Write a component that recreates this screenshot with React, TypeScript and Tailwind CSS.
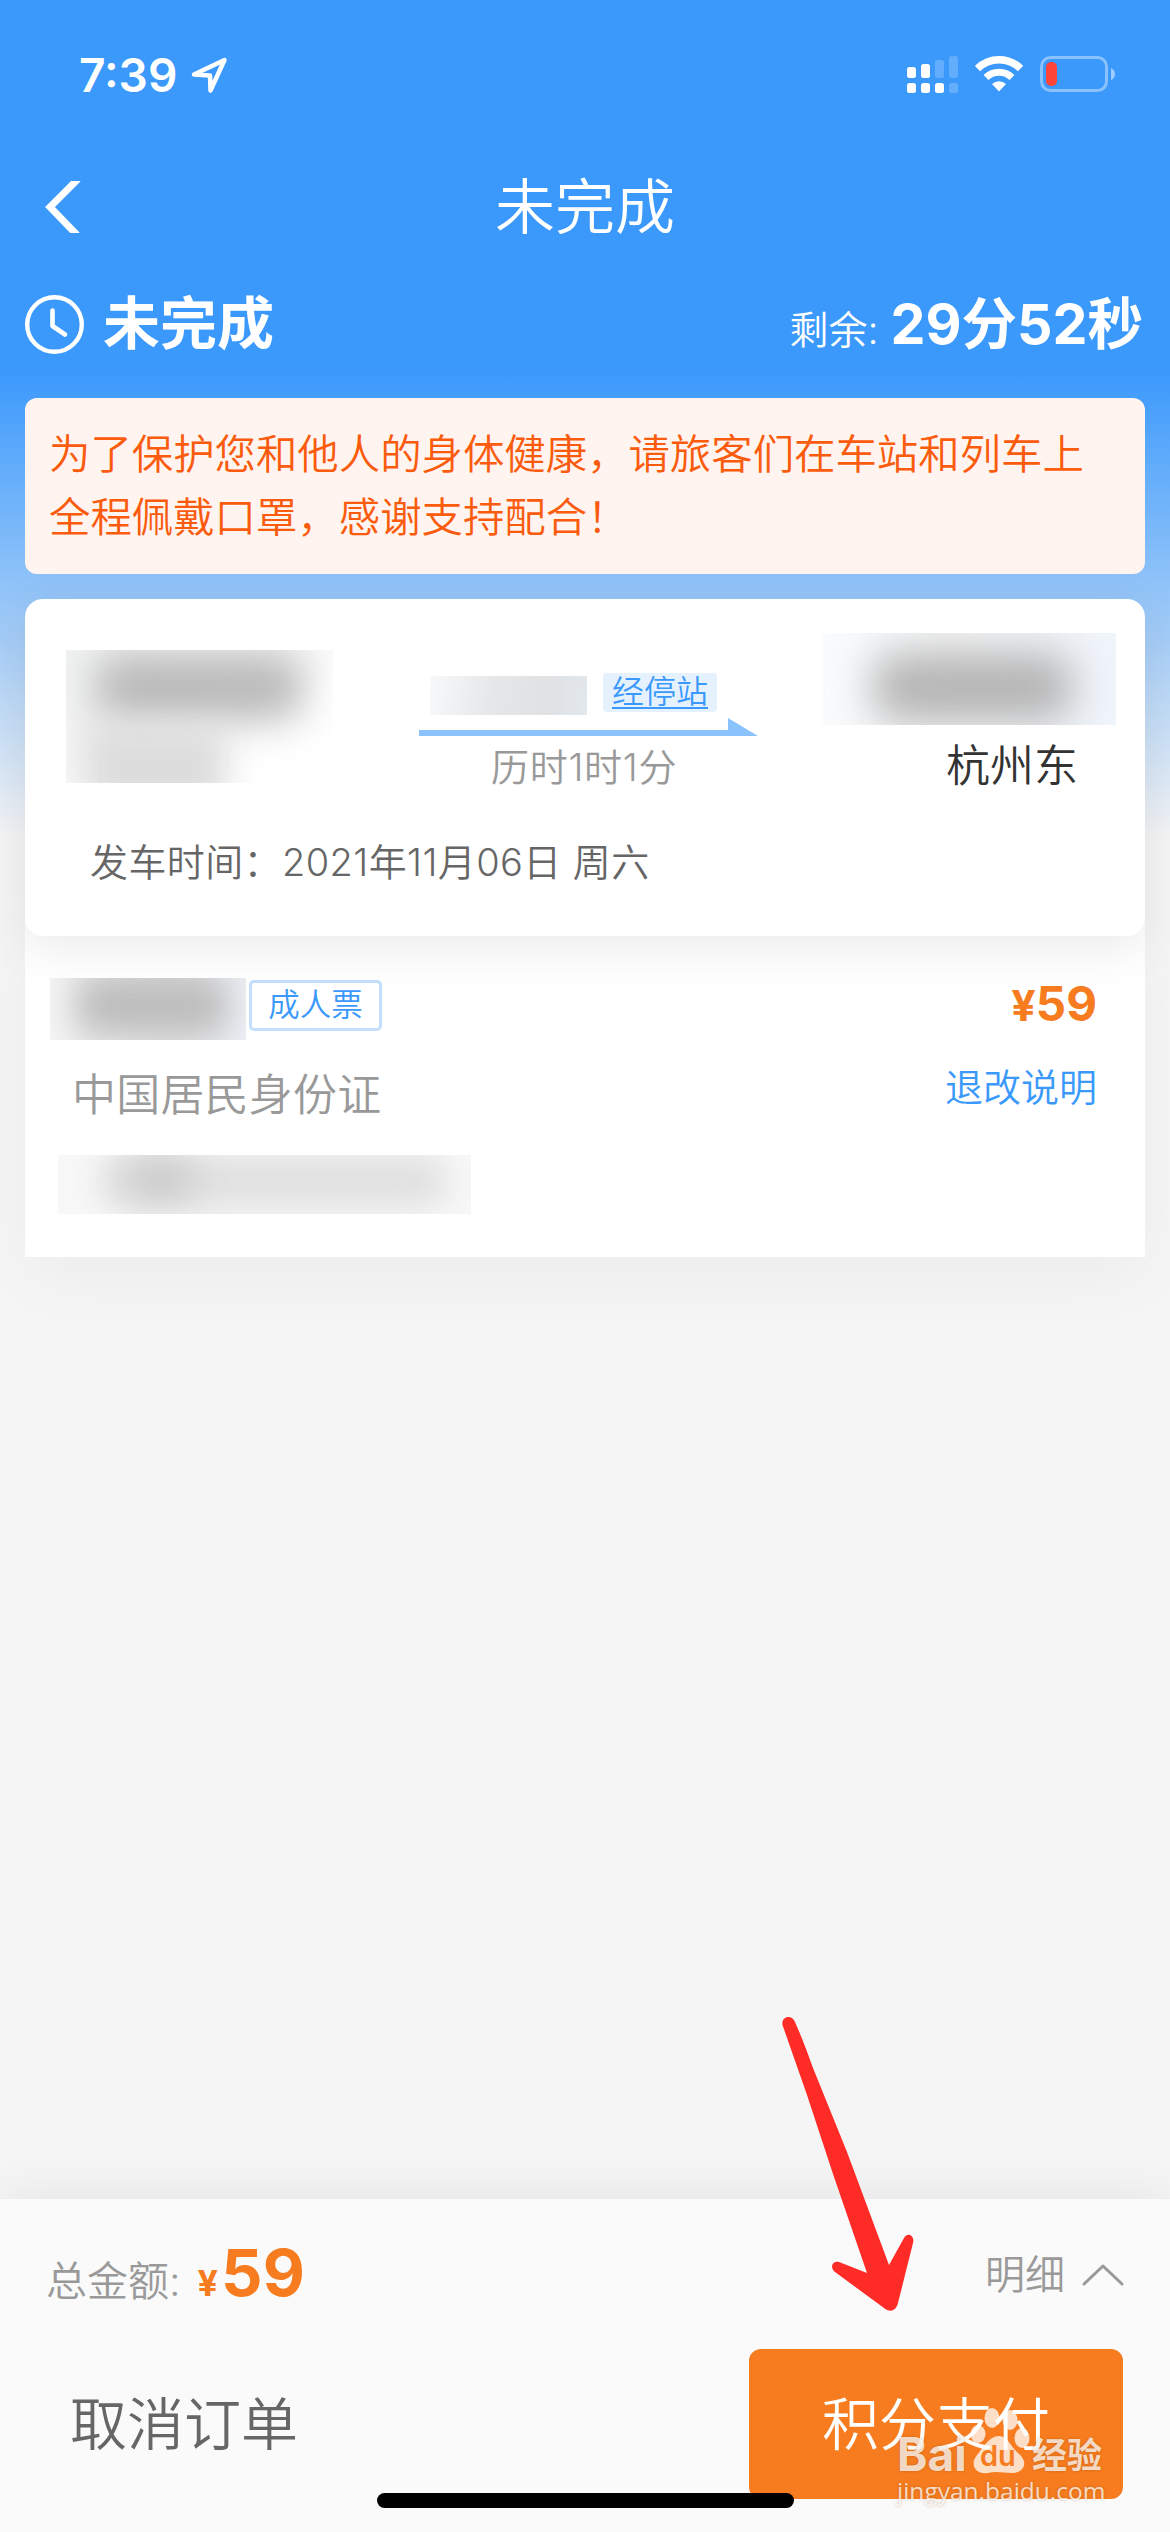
import type { ReactNode } from 'react';

const notice = ['为了保护您和他人的身体健康，请旅客们在车站和列车上', '全程佩戴口罩，感谢支持配合！'];

function StatusBar() {
  return (
    <div className="flex h-[150px] items-start justify-between pt-[48px] pl-[79px] pr-[54px] text-white">
      <div className="flex items-start">
        <span className="text-[46px] leading-[54px] font-semibold w-[112px] whitespace-nowrap">7:39</span>
        <svg className="mt-[8px]" width="38" height="38" viewBox="0 0 38 38" fill="none">
          <path d="M3 18.5 L33.5 4 L19.5 34.5 L19 19.5 Z" stroke="#fff" strokeWidth="4.5" strokeLinejoin="round" />
        </svg>
      </div>
      <div className="flex items-start pt-[7px]">
        <svg width="51" height="38" viewBox="0 0 51 38" fill="#fff">
          <rect x="0" y="12" width="9" height="11" rx="2.5" />
          <rect x="14" y="9" width="9" height="14" rx="2.5" />
          <rect x="28" y="5" width="9" height="18" rx="2.5" opacity="0.2" />
          <rect x="42" y="1" width="9" height="22" rx="2.5" opacity="0.2" />
          <rect x="0" y="28" width="9" height="10" rx="2.5" />
          <rect x="14" y="28" width="9" height="10" rx="2.5" />
          <rect x="28" y="28" width="9" height="10" rx="2.5" />
          <rect x="42" y="28" width="9" height="10" rx="2.5" opacity="0.2" />
        </svg>
        <svg className="ml-[17px]" width="48" height="37" viewBox="0 0 48 37" fill="none">
          <path d="M2.5 13.5 A30.5 30.5 0 0 1 45.5 13.5" stroke="#fff" strokeWidth="7.5" />
          <path d="M11 22.500 A18.5 18.5 0 0 1 37 22.500" stroke="#fff" strokeWidth="7" />
          <path d="M17 29 A10 10 0 0 1 31 29 L24 36.500 Z" fill="#fff" />
        </svg>
        <svg className="ml-[17px] mt-px" width="76" height="36" viewBox="0 0 76 36" fill="none">
          <rect x="1.5" y="1.5" width="65" height="33" rx="9" stroke="#fff" strokeOpacity="0.4" strokeWidth="3" />
          <rect x="6" y="6" width="11" height="24" rx="5" fill="#ff443a" />
          <path d="M71 12 Q75 14 75 18 Q75 22 71 24 Z" fill="#fff" fillOpacity="0.5" />
        </svg>
      </div>
    </div>
  );
}

function Header() {
  return (
    <>
      <div className="grid h-[114px] grid-cols-[1fr_auto_1fr] items-center text-white">
        <svg className="ml-[44px]" width="38" height="52" viewBox="0 0 38 52" fill="none">
          <path d="M34 -2 L6 26 L33 54" stroke="#fff" strokeWidth="7" />
        </svg>
        <h1 className="text-[60px] leading-[80px]">未完成</h1>
      </div>
      <div className="flex h-[134px] items-start justify-between pt-[20px] pl-[25px] pr-[27px] text-white">
        <div className="flex items-start">
          <svg className="mt-[11px]" width="59" height="59" viewBox="0 0 59 59" fill="none" stroke="#fff">
            <circle cx="29.5" cy="29.5" r="27.3" strokeWidth="4.4" />
            <path d="M27.5 15.500V31L40 39.500" strokeWidth="4.6" strokeLinecap="round" strokeLinejoin="round" />
          </svg>
          <span className="ml-[19px] text-[57px] leading-[80px] font-bold">未完成</span>
        </div>
        <div className="flex items-baseline whitespace-nowrap">
          <span className="text-[39px]">剩余:</span>
          <span className="ml-[12px] text-[55.500px] leading-[80px] font-bold">29分52秒</span>
        </div>
      </div>
    </>
  );
}

function TripCard() {
  return (
    <section className="h-[337px] rounded-[18px] bg-white shadow-[0_10px_50px_rgba(0,0,0,0.09)]">
      <div className="flex h-[230px] items-start">
        {/* masked departure time and station */}
        <div className="relative ml-[41px] mt-[51px] h-[133px] w-[267px] overflow-hidden bg-[linear-gradient(150deg,#f1f3f3_0%,#f6f6f6_40%,#ffffff_65%)]">
          <div className="absolute top-[4px] left-[28px] h-[66px] w-[210px] rounded-[24px] bg-[#b8b8b8] blur-[21px]" />
          <div className="absolute top-[76px] left-[18px] h-[80px] w-[142px] rounded-[10px] bg-[#dcdcdc] blur-[17px]" />
        </div>
        <div className="ml-[86px] mt-[74px] w-[340px]">
          <div className="flex items-start">
            <div className="ml-[11px] mt-[3px] h-[39px] w-[157px] bg-[linear-gradient(100deg,#f7f9fa_0%,#e6e7e8_40%,#dfe1e3_75%,#e3e8ee_100%)]" />
            <a className="ml-[16px] block h-[39px] w-[114px] rounded-[4px] bg-[#e5f2fe] pl-[9px] text-[32px] leading-[37px] text-[#3b99fc]">
              <span className="block h-[36px] w-[96px] border-b-[2px] border-[#3b99fc]">经停站</span>
            </a>
          </div>
          <svg className="mt-[3px]" width="340" height="18" viewBox="0 0 340 18" fill="#89c2fc">
            <path d="M0 12H309V0L339 18H0Z" />
          </svg>
          <p className="mt-[5px] pl-[72px] text-[38px] leading-[52px] tracking-[0.7px] text-[#999]">历时1时1分</p>
        </div>
        <div className="ml-[64px] mt-[34px] w-[293px]">
          {/* masked arrival time */}
          <div className="relative h-[92px] overflow-hidden bg-[linear-gradient(90deg,#f9fbfd_0%,#f3f4f5_50%,#f0f5fc_100%)]">
            <div className="absolute top-[20px] left-[50px] h-[68px] w-[200px] rounded-[24px] bg-[#b4b4b4] blur-[21px]" />
          </div>
          <p className="pt-[13px] pr-[38px] text-right text-[44px] leading-[56px] text-[#333]">杭州东</p>
        </div>
      </div>
      <p className="pl-[65px] pt-[5px] text-[38px] leading-[56px] tracking-[0.4px] text-[#666]">发车时间：2021年11月06日 周六</p>
    </section>
  );
}

function PassengerCard() {
  return (
    <section className="-mt-[18px] flex h-[339px] justify-between bg-white pt-[60px] pl-[25px] pr-[48px] shadow-[0_20px_70px_rgba(0,0,0,0.04)]">
      <div>
        <div className="flex items-start">
          {/* masked passenger name */}
          <div className="relative h-[62px] w-[196px] overflow-hidden bg-[linear-gradient(90deg,#f5f5f5_0%,#e8e8e8_60%,#edf0f6_100%)]">
            <div className="absolute top-[-4px] left-[26px] h-[62px] w-[152px] rounded-[16px] bg-[#bdbdbd] blur-[17px]" />
          </div>
          <span className="ml-[3px] mt-[2px] h-[51px] w-[133px] rounded-[5px] border-[3px] border-[#c4dffc] text-center text-[31.500px] leading-[44px] text-[#3b99fc]">成人票</span>
        </div>
        <p className="mt-[24px] ml-[22px] text-[44px] leading-[62px] tracking-[0.2px] text-[#999]">中国居民身份证</p>
        {/* masked id number */}
        <div className="relative ml-[8px] mt-[29px] h-[59px] w-[413px] overflow-hidden bg-[#f8f8f8]">
          <div className="absolute top-[0px] left-[44px] h-[52px] w-[344px] rounded-[14px] bg-[#dfdfdf] blur-[17px]" />
          <div className="absolute top-[2px] left-[66px] h-[44px] w-[72px] rounded-full bg-[#cbcbcb] blur-[18px]" />
        </div>
      </div>
      <div className="text-right">
        <p className="mt-[-1px] text-[47.500px] leading-[54px] font-bold text-[#f67c1f]">
          <span className="text-[43px]">¥</span>59
        </p>
        <a className="mt-[25px] block text-[38px] leading-[60px] text-[#3b99fc]">退改说明</a>
      </div>
    </section>
  );
}

function Watermark() {
  return (
    <div className="absolute top-[209px] left-[897px] w-[212px] text-[#fff]/75 [text-shadow:0_0_3px_rgba(120,60,0,0.35)]">
      <div className="flex h-[66px] items-start whitespace-nowrap font-bold">
        <span className="mt-[18px] w-[75px] text-[46px] leading-[56px]">Bai</span>
        <div className="relative h-[66px] w-[56px]">
          <svg className="overflow-visible" width="58" height="66" viewBox="0 0 58 66" fill="currentColor">
            <ellipse cx="6" cy="26" rx="7.500" ry="9" />
            <ellipse cx="20" cy="10" rx="7.500" ry="10" />
            <ellipse cx="38" cy="12" rx="7.500" ry="10" />
            <ellipse cx="50" cy="30" rx="7.500" ry="10" />
            <path d="M27 28C36 28 38 38 46 45C58 55 51 65 40 65C32 65 24 63 16 65C4 67 -3 57 5 47C11 40 17 28 27 28Z" />
          </svg>
          <span className="absolute top-[34px] left-[8px] text-[29px] leading-[28px] font-semibold text-[#f67c1f] [text-shadow:none]">du</span>
        </div>
        <span className="ml-[4px] mt-[27px] text-[35px] leading-[40px]">经验</span>
      </div>
      <p className="font-['Open_Sans',sans-serif] text-[24.500px] leading-[34px] font-medium">jingyan.baidu.com</p>
    </div>
  );
}

function Footer({ children }: { children?: ReactNode }) {
  return (
    <footer className="relative h-[333px] bg-[#fafafa] shadow-[0_0_50px_rgba(0,0,0,0.08)]">
      <div className="flex h-[112px] items-start justify-between pt-[37px] pl-[46px] pr-[45px]">
        <div className="flex items-baseline font-bold text-[#f67c1f]">
          <span className="text-[41px] font-[350] text-[#999]">总金额:</span>
          <span className="ml-[17px] text-[36px]">¥</span>
          <span className="ml-[3px] text-[65px] leading-[74px]">59</span>
        </div>
        <div className="flex items-center pt-[10px] text-[40px] leading-[58px] text-[#999]">
          明细
          <svg className="ml-[16px]" width="44" height="26" viewBox="0 0 44 26" fill="none">
            <path d="M3 22L22 4L41 22" stroke="#999" strokeWidth="3" strokeLinecap="round" strokeLinejoin="round" />
          </svg>
        </div>
      </div>
      <div className="mt-[38px] flex items-start justify-between pl-[70px] pr-[47px]">
        <button className="h-[150px] text-[57px] leading-[145px] text-[#666]">取消订单</button>
        <button className="h-[150px] w-[374px] rounded-[12px] bg-[#f67c1f] text-[57px] leading-[145px] text-white">积分支付</button>
      </div>
      <div className="absolute bottom-[24px] left-[377px] h-[15px] w-[417px] rounded-full bg-black" />
      {children}
    </footer>
  );
}

function App() {
  return (
    <div className="relative flex h-[2532px] w-[1170px] flex-col overflow-hidden bg-[#f5f5f5] bg-[linear-gradient(180deg,#3b99fc_0px,#3b99fc_370px,#f5f5f5_840px)] font-['Inter','Noto_Sans_CJK_SC',sans-serif] font-[350]">
      <StatusBar />
      <Header />
      <main className="flex-1 px-[25px]">
        <div className="h-[176px] rounded-[12px] bg-[#fff4ef] pt-[25px] pl-[24px] text-[41.400px] leading-[63px] text-[#fa5b0d]">
          {notice.map((line) => (
            <p key={line} className="whitespace-nowrap">{line}</p>
          ))}
        </div>
        <div className="mt-[25px] flex flex-col">
          <div className="relative z-10">
            <TripCard />
          </div>
          <PassengerCard />
        </div>
      </main>
      <Footer>
        <Watermark />
      </Footer>
      {/* hand-drawn pointer to the pay button */}
      <svg className="absolute top-[2016px] left-[780px]" width="136" height="298" viewBox="780 2016 136 298" fill="#ff2b27">
        <path d="M782.500 2025C781 2016 792 2014 795 2022C803 2040 808 2054 813 2068L847 2152L889 2265L904 2238C908 2231 915 2236 913 2243L898 2303C896 2311 890 2313 884 2308L835 2272C829 2267 833 2260 839 2262L867 2273L833 2174L807 2095Z" />
      </svg>
    </div>
  );
}

export default App;
